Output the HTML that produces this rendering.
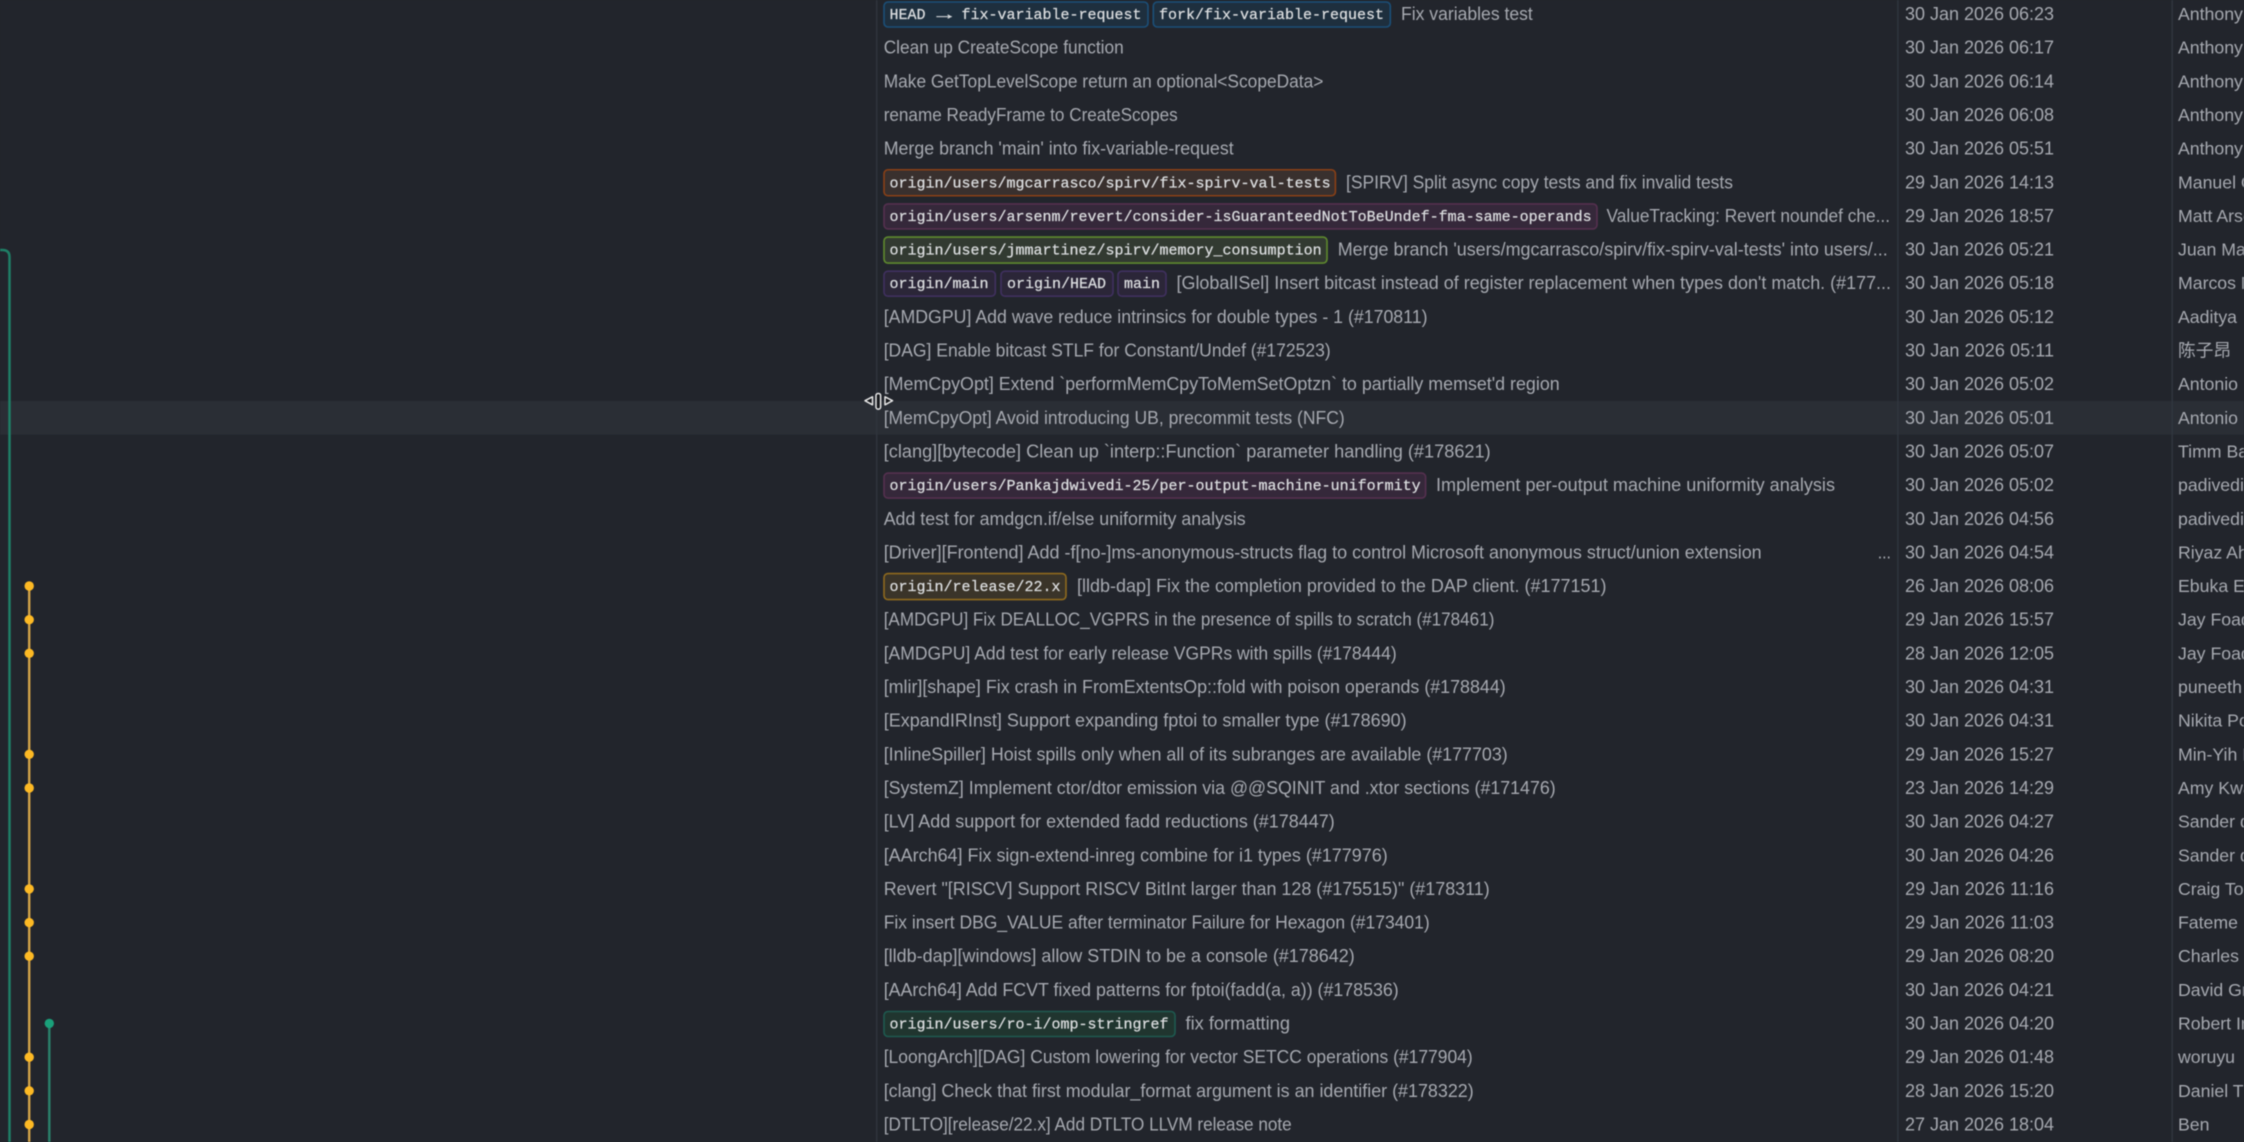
<!DOCTYPE html>
<html lang="en">
<head>
<meta charset="utf-8">
<title>Commit graph</title>
<style>
html,body{margin:0;padding:0;background:#22252c;width:2244px;height:1142px;overflow:hidden}
svg{display:block;position:absolute;left:0;top:0;filter:blur(.5px)}
text{white-space:pre}
.m{font:18px "Liberation Sans","Noto Sans CJK SC",sans-serif;fill:#a6a9b0}
.d{font:18px "Liberation Sans",sans-serif;fill:#a6a9b0}
.a{font:17.7px "Liberation Sans","Noto Sans CJK SC",sans-serif;fill:#a6a9b0}
.t{font:15px "Liberation Mono",monospace;fill:#dcdee0;stroke:#dcdee0;stroke-width:.25}
.blue{fill:#1e2f3e;stroke:#1b4f78}
.orange{fill:#39302e;stroke:#8a4016}
.mag{fill:#35283a;stroke:#55304f}
.green{fill:#323a31;stroke:#5f8a2e}
.pur{fill:#2b2638;stroke:#40305f}
.yel{fill:#3a3429;stroke:#8f6a1e}
.teal{fill:#20352f;stroke:#1e5a50}
rect.tag{stroke-width:1.6}
</style>
</head>
<body>
<svg width="2244" height="1142" viewBox="0 0 2244 1142" xmlns="http://www.w3.org/2000/svg">
<rect x="-5" y="-5" width="2254" height="1152" fill="#22252c"/>
<rect x="-5" y="401" width="2254" height="33.7" fill="#2a2e35"/>
<rect x="876" y="-5" width="1.4" height="1152" fill="#30353d"/>
<rect x="1897.2" y="-5" width="1.4" height="1152" fill="#30363f"/>
<rect x="2171.5" y="-5" width="1.4" height="1152" fill="#30363f"/>

<!-- graph -->
<path d="M-5 250H2.5Q9.5 250 9.5 257V1147" fill="none" stroke="#1f7f66" stroke-width="2.5"/>
<path d="M29.2 586V1147" fill="none" stroke="#d2a349" stroke-width="2.4"/>
<path d="M49.3 1023V1147" fill="none" stroke="#2a7f6a" stroke-width="2.5"/>
<g fill="#fdb924">
<circle cx="29.2" cy="586" r="4.7"/><circle cx="29.2" cy="619.7" r="4.7"/><circle cx="29.2" cy="653.3" r="4.7"/>
<circle cx="29.2" cy="754.3" r="4.7"/><circle cx="29.2" cy="788" r="4.7"/>
<circle cx="29.2" cy="888.9" r="4.7"/><circle cx="29.2" cy="922.6" r="4.7"/><circle cx="29.2" cy="956.2" r="4.7"/>
<circle cx="29.2" cy="1057.2" r="4.7"/><circle cx="29.2" cy="1090.8" r="4.7"/><circle cx="29.2" cy="1124.5" r="4.7"/>
</g>
<circle cx="49.3" cy="1023.4" r="4.7" fill="#1aa07a"/>

<!-- rows -->
<g transform="translate(0,20)">
<rect class="tag blue" x="884" y="-18" width="264" height="25" rx="4"/><text class="t" x="889.5" y="-1">HEAD</text><text class="t" x="936.5" y="-1" textLength="15.5" lengthAdjust="spacingAndGlyphs">→</text><text class="t" x="961.5" y="-1">fix-variable-request</text>
<rect class="tag blue" x="1153.3" y="-18" width="237" height="25" rx="4"/><text class="t" x="1159" y="-1">fork/fix-variable-request</text>
<text class="m" x="1401" textLength="131.8" lengthAdjust="spacingAndGlyphs">Fix variables test</text>
<text class="d" x="1905" textLength="149">30 Jan 2026 06:23</text><text class="a" x="2178">Anthony Nguyen</text></g>

<g transform="translate(0,53.65)"><text class="m" x="883.7" textLength="240" lengthAdjust="spacingAndGlyphs">Clean up CreateScope function</text>
<text class="d" x="1905" textLength="149">30 Jan 2026 06:17</text><text class="a" x="2178">Anthony Nguyen</text></g>

<g transform="translate(0,87.3)"><text class="m" x="883.7" textLength="439.7" lengthAdjust="spacingAndGlyphs">Make GetTopLevelScope return an optional&lt;ScopeData&gt;</text>
<text class="d" x="1905" textLength="149">30 Jan 2026 06:14</text><text class="a" x="2178">Anthony Nguyen</text></g>

<g transform="translate(0,120.95)"><text class="m" x="883.7" textLength="294" lengthAdjust="spacingAndGlyphs">rename ReadyFrame to CreateScopes</text>
<text class="d" x="1905" textLength="149">30 Jan 2026 06:08</text><text class="a" x="2178">Anthony Nguyen</text></g>

<g transform="translate(0,154.6)"><text class="m" x="883.7" textLength="350" lengthAdjust="spacingAndGlyphs">Merge branch 'main' into fix-variable-request</text>
<text class="d" x="1905" textLength="149">30 Jan 2026 05:51</text><text class="a" x="2178">Anthony Nguyen</text></g>

<g transform="translate(0,188.25)">
<rect class="tag orange" x="884" y="-18.5" width="451.4" height="26" rx="4"/><text class="t" x="889.5" y="-1">origin/users/mgcarrasco/spirv/fix-spirv-val-tests</text>
<text class="m" x="1346" textLength="387" lengthAdjust="spacingAndGlyphs">[SPIRV] Split async copy tests and fix invalid tests</text>
<text class="d" x="1905" textLength="149">29 Jan 2026 14:13</text><text class="a" x="2178">Manuel Carrasco</text></g>

<g transform="translate(0,221.9)">
<rect class="tag mag" x="884" y="-18" width="713" height="25" rx="4"/><text class="t" x="889.5" y="-1">origin/users/arsenm/revert/consider-isGuaranteedNotToBeUndef-fma-same-operands</text>
<text class="m" x="1606.5" textLength="283.5" lengthAdjust="spacingAndGlyphs">ValueTracking: Revert noundef che...</text>
<text class="d" x="1905" textLength="149">29 Jan 2026 18:57</text><text class="a" x="2178">Matt Arsenault</text></g>

<g transform="translate(0,255.55)">
<rect class="tag green" x="884" y="-18.5" width="443" height="26" rx="4"/><text class="t" x="889.5" y="-1">origin/users/jmmartinez/spirv/memory_consumption</text>
<text class="m" x="1337.7" textLength="550" lengthAdjust="spacingAndGlyphs">Merge branch 'users/mgcarrasco/spirv/fix-spirv-val-tests' into users/...</text>
<text class="d" x="1905" textLength="149">30 Jan 2026 05:21</text><text class="a" x="2178">Juan Manuel</text></g>

<g transform="translate(0,289.2)">
<rect class="tag pur" x="884" y="-18" width="111.3" height="25" rx="4"/><text class="t" x="889.5" y="-1">origin/main</text>
<rect class="tag pur" x="1001" y="-18" width="112" height="25" rx="4"/><text class="t" x="1007" y="-1">origin/HEAD</text>
<rect class="tag pur" x="1118" y="-18" width="48" height="25" rx="4"/><text class="t" x="1124" y="-1">main</text>
<text class="m" x="1176.5" textLength="714.5" lengthAdjust="spacingAndGlyphs">[GlobalISel] Insert bitcast instead of register replacement when types don't match. (#177...</text>
<text class="d" x="1905" textLength="149">30 Jan 2026 05:18</text><text class="a" x="2178">Marcos Maronas</text></g>

<g transform="translate(0,322.85)"><text class="m" x="883.7" textLength="543.8" lengthAdjust="spacingAndGlyphs">[AMDGPU] Add wave reduce intrinsics for double types - 1 (#170811)</text>
<text class="d" x="1905" textLength="149">30 Jan 2026 05:12</text><text class="a" x="2178">Aaditya</text></g>

<g transform="translate(0,356.5)"><text class="m" x="883.7" textLength="447" lengthAdjust="spacingAndGlyphs">[DAG] Enable bitcast STLF for Constant/Undef (#172523)</text>
<text class="d" x="1905" textLength="149">30 Jan 2026 05:11</text><text class="a" x="2178">陈子昂</text></g>

<g transform="translate(0,390.15)"><text class="m" x="883.7" textLength="676" lengthAdjust="spacingAndGlyphs">[MemCpyOpt] Extend `performMemCpyToMemSetOptzn` to partially memset'd region</text>
<text class="d" x="1905" textLength="149">30 Jan 2026 05:02</text><text class="a" x="2178">Antonio Frighetto</text></g>

<g transform="translate(0,423.8)"><text class="m" x="883.7" textLength="461" lengthAdjust="spacingAndGlyphs">[MemCpyOpt] Avoid introducing UB, precommit tests (NFC)</text>
<text class="d" x="1905" textLength="149">30 Jan 2026 05:01</text><text class="a" x="2178">Antonio Frighetto</text></g>

<g transform="translate(0,457.45)"><text class="m" x="883.7" textLength="607" lengthAdjust="spacingAndGlyphs">[clang][bytecode] Clean up `interp::Function` parameter handling (#178621)</text>
<text class="d" x="1905" textLength="149">30 Jan 2026 05:07</text><text class="a" x="2178">Timm Baeder</text></g>

<g transform="translate(0,491.1)">
<rect class="tag mag" x="884" y="-18" width="541.6" height="25" rx="4"/><text class="t" x="889.5" y="-1">origin/users/Pankajdwivedi-25/per-output-machine-uniformity</text>
<text class="m" x="1436" textLength="399" lengthAdjust="spacingAndGlyphs">Implement per-output machine uniformity analysis</text>
<text class="d" x="1905" textLength="149">30 Jan 2026 05:02</text><text class="a" x="2178">padivedi</text></g>

<g transform="translate(0,524.75)"><text class="m" x="883.7" textLength="362" lengthAdjust="spacingAndGlyphs">Add test for amdgcn.if/else uniformity analysis</text>
<text class="d" x="1905" textLength="149">30 Jan 2026 04:56</text><text class="a" x="2178">padivedi</text></g>

<g transform="translate(0,558.4)"><text class="m" x="883.7" textLength="878" lengthAdjust="spacingAndGlyphs">[Driver][Frontend] Add -f[no-]ms-anonymous-structs flag to control Microsoft anonymous struct/union extension</text>
<text class="m" x="1877.7" textLength="13.3" lengthAdjust="spacingAndGlyphs">...</text>
<text class="d" x="1905" textLength="149">30 Jan 2026 04:54</text><text class="a" x="2178">Riyaz Ahmad</text></g>

<g transform="translate(0,592.05)">
<rect class="tag yel" x="884" y="-18.5" width="182" height="26" rx="4"/><text class="t" x="889.5" y="-1">origin/release/22.x</text>
<text class="m" x="1077" textLength="529.5" lengthAdjust="spacingAndGlyphs">[lldb-dap] Fix the completion provided to the DAP client. (#177151)</text>
<text class="d" x="1905" textLength="149">26 Jan 2026 08:06</text><text class="a" x="2178">Ebuka Ezike</text></g>

<g transform="translate(0,625.7)"><text class="m" x="883.7" textLength="610.7" lengthAdjust="spacingAndGlyphs">[AMDGPU] Fix DEALLOC_VGPRS in the presence of spills to scratch (#178461)</text>
<text class="d" x="1905" textLength="149">29 Jan 2026 15:57</text><text class="a" x="2178">Jay Foad</text></g>

<g transform="translate(0,659.35)"><text class="m" x="883.7" textLength="513" lengthAdjust="spacingAndGlyphs">[AMDGPU] Add test for early release VGPRs with spills (#178444)</text>
<text class="d" x="1905" textLength="149">28 Jan 2026 12:05</text><text class="a" x="2178">Jay Foad</text></g>

<g transform="translate(0,693)"><text class="m" x="883.7" textLength="622" lengthAdjust="spacingAndGlyphs">[mlir][shape] Fix crash in FromExtentsOp::fold with poison operands (#178844)</text>
<text class="d" x="1905" textLength="149">30 Jan 2026 04:31</text><text class="a" x="2178">puneeth</text></g>

<g transform="translate(0,726.65)"><text class="m" x="883.7" textLength="523" lengthAdjust="spacingAndGlyphs">[ExpandIRInst] Support expanding fptoi to smaller type (#178690)</text>
<text class="d" x="1905" textLength="149">30 Jan 2026 04:31</text><text class="a" x="2178">Nikita Popov</text></g>

<g transform="translate(0,760.3)"><text class="m" x="883.7" textLength="624" lengthAdjust="spacingAndGlyphs">[InlineSpiller] Hoist spills only when all of its subranges are available (#177703)</text>
<text class="d" x="1905" textLength="149">29 Jan 2026 15:27</text><text class="a" x="2178">Min-Yih Hsu</text></g>

<g transform="translate(0,793.95)"><text class="m" x="883.7" textLength="672" lengthAdjust="spacingAndGlyphs">[SystemZ] Implement ctor/dtor emission via @@SQINIT and .xtor sections (#171476)</text>
<text class="d" x="1905" textLength="149">23 Jan 2026 14:29</text><text class="a" x="2178">Amy Kwan</text></g>

<g transform="translate(0,827.6)"><text class="m" x="883.7" textLength="451" lengthAdjust="spacingAndGlyphs">[LV] Add support for extended fadd reductions (#178447)</text>
<text class="d" x="1905" textLength="149">30 Jan 2026 04:27</text><text class="a" x="2178">Sander de Smalen</text></g>

<g transform="translate(0,861.25)"><text class="m" x="883.7" textLength="504" lengthAdjust="spacingAndGlyphs">[AArch64] Fix sign-extend-inreg combine for i1 types (#177976)</text>
<text class="d" x="1905" textLength="149">30 Jan 2026 04:26</text><text class="a" x="2178">Sander de Smalen</text></g>

<g transform="translate(0,894.9)"><text class="m" x="883.7" textLength="606" lengthAdjust="spacingAndGlyphs">Revert "[RISCV] Support RISCV BitInt larger than 128 (#175515)" (#178311)</text>
<text class="d" x="1905" textLength="149">29 Jan 2026 11:16</text><text class="a" x="2178">Craig Topper</text></g>

<g transform="translate(0,928.55)"><text class="m" x="883.7" textLength="546" lengthAdjust="spacingAndGlyphs">Fix insert DBG_VALUE after terminator Failure for Hexagon (#173401)</text>
<text class="d" x="1905" textLength="149">29 Jan 2026 11:03</text><text class="a" x="2178">Fateme Hosseini</text></g>

<g transform="translate(0,962.2)"><text class="m" x="883.7" textLength="471" lengthAdjust="spacingAndGlyphs">[lldb-dap][windows] allow STDIN to be a console (#178642)</text>
<text class="d" x="1905" textLength="149">29 Jan 2026 08:20</text><text class="a" x="2178">Charles Zablit</text></g>

<g transform="translate(0,995.85)"><text class="m" x="883.7" textLength="515" lengthAdjust="spacingAndGlyphs">[AArch64] Add FCVT fixed patterns for fptoi(fadd(a, a)) (#178536)</text>
<text class="d" x="1905" textLength="149">30 Jan 2026 04:21</text><text class="a" x="2178">David Green</text></g>

<g transform="translate(0,1029.5)">
<rect class="tag teal" x="884" y="-18" width="291" height="25" rx="4"/><text class="t" x="889.5" y="-1">origin/users/ro-i/omp-stringref</text>
<text class="m" x="1185.5" textLength="104.5" lengthAdjust="spacingAndGlyphs">fix formatting</text>
<text class="d" x="1905" textLength="149">30 Jan 2026 04:20</text><text class="a" x="2178">Robert Imschweiler</text></g>

<g transform="translate(0,1063.15)"><text class="m" x="883.7" textLength="589" lengthAdjust="spacingAndGlyphs">[LoongArch][DAG] Custom lowering for vector SETCC operations (#177904)</text>
<text class="d" x="1905" textLength="149">29 Jan 2026 01:48</text><text class="a" x="2178">woruyu</text></g>

<g transform="translate(0,1096.8)"><text class="m" x="883.7" textLength="590" lengthAdjust="spacingAndGlyphs">[clang] Check that first modular_format argument is an identifier (#178322)</text>
<text class="d" x="1905" textLength="149">28 Jan 2026 15:20</text><text class="a" x="2178">Daniel Thornburgh</text></g>

<g transform="translate(0,1130.45)"><text class="m" x="883.7" textLength="408" lengthAdjust="spacingAndGlyphs">[DTLTO][release/22.x] Add DTLTO LLVM release note</text>
<text class="d" x="1905" textLength="149">27 Jan 2026 18:04</text><text class="a" x="2178">Ben</text></g>

<!-- resize cursor -->
<g stroke="#e8e8e8" stroke-width="1.5" fill="#15171b" stroke-linejoin="round">
<polygon points="865,400.7 872.5,396.8 872.5,404.8"/>
<rect x="876" y="393.5" width="4.6" height="15.6" rx="2"/>
<polygon points="892.5,400.7 885,396.8 885,404.8"/>
</g>
</svg>
</body>
</html>
